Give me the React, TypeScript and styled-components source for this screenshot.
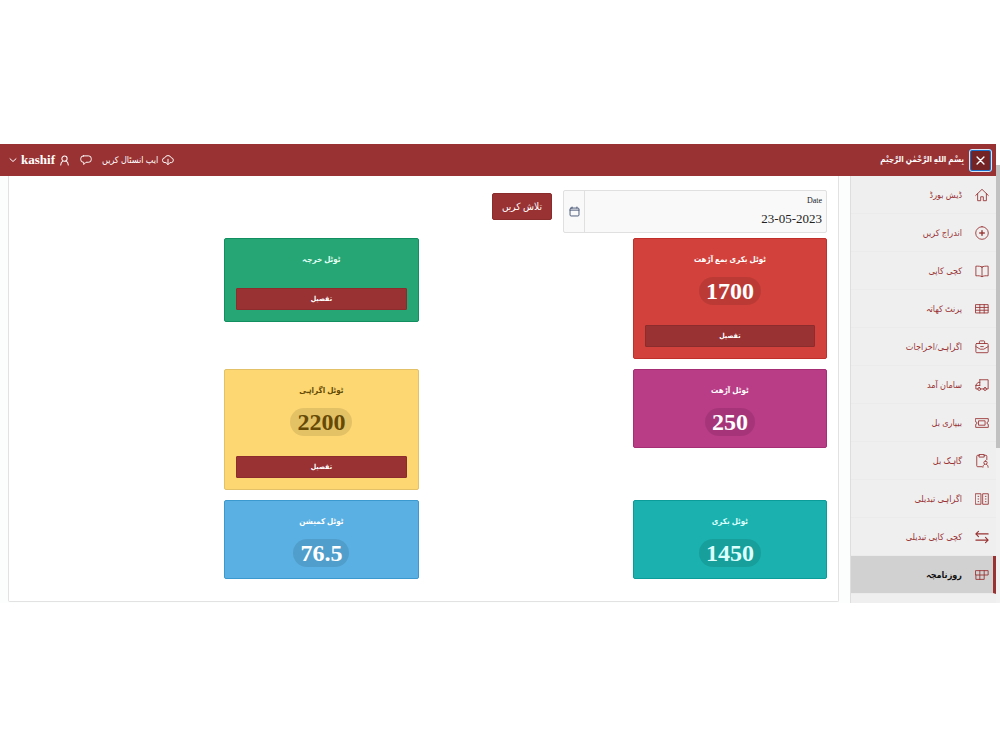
import React from "react";
import styled, { createGlobalStyle } from "styled-components";

const brand = "#993233";

const GlobalStyle = createGlobalStyle`
  *, *::before, *::after { box-sizing: border-box; }
  body {
    margin: 0;
    background: #fff;
    font-family: "Liberation Serif", "DejaVu Sans Condensed", "DejaVu Sans", serif;
  }
  button, input { font-family: inherit; margin: 0; }
`;

const Page = styled.div`
  direction: rtl;
  display: flex;
  margin-top: 144px;
`;

const ScrollRail = styled.div`
  flex: none;
  width: 4px;
  padding-top: 21px;
  background: linear-gradient(#fff 21px, #f1f1f1 21px);
`;

const ScrollThumb = styled.div`
  height: 283px;
  background: #c1c1c1;
`;

const Shell = styled.div`
  flex: 1;
  min-width: 0;
`;

const TopBar = styled.header`
  display: flex;
  align-items: center;
  height: 32px;
  padding: 0 4px 0 9px;
  background: ${brand};
  color: #fff;
`;

const CloseButton = styled.button`
  display: grid;
  place-items: center;
  width: 23px;
  height: 23px;
  padding: 0;
  border: 2px solid #1b6fc9;
  border-radius: 3px;
  outline: 1px solid #d9e6f5;
  outline-offset: -1px;
  background: #752425;
  color: #fff;
`;

const Brand = styled.strong`
  flex: 1;
  margin-right: 5px;
  font-size: 8px;
  line-height: 20px;
`;

const TopActions = styled.div`
  display: flex;
  align-items: center;
  gap: 10px;
`;

const TopButton = styled.button`
  display: flex;
  align-items: center;
  gap: 4px;
  padding: 0;
  border: 0;
  background: none;
  color: inherit;
  font-size: 9px;
  line-height: 20px;
`;

const UserName = styled.span`
  font-size: 13px;
  font-weight: 700;
`;

const Body = styled.div`
  display: flex;
  background: #fcfdfd;
`;

const Sidebar = styled.nav`
  flex: none;
  width: 146px;
  padding-bottom: 9px;
  border-left: 1px solid #dedede;
  background: #efefef;
`;

const NavLink = styled.a<{ $active?: boolean }>`
  display: flex;
  align-items: center;
  gap: 13px;
  height: 38px;
  padding-right: ${(p) => (p.$active ? 4 : 7)}px;
  border-right: ${(p) => (p.$active ? `3px solid ${brand}` : "0")};
  border-bottom: 1px solid #ebebeb;
  background: ${(p) => (p.$active ? "#d1d1d1" : "transparent")};
  color: ${(p) => (p.$active ? "#111" : brand)};
  font-size: 9px;
  font-weight: ${(p) => (p.$active ? 700 : 400)};
  text-decoration: none;

  svg { color: ${brand}; }
`;

const Main = styled.main`
  flex: 1;
  min-width: 0;
  padding: 0 11px 1px 8px;
`;

const Panel = styled.section`
  height: 100%;
  padding: 14px 11px 20px;
  border: 1px solid #e2e2e2;
  border-top: 0;
  border-radius: 0 0 2px 2px;
  background: #fff;
`;

const Filters = styled.form`
  display: flex;
  align-items: flex-start;
  gap: 11px;
  margin-bottom: 5px;
`;

const DateField = styled.div`
  display: flex;
  width: 264px;
  height: 43px;
  border: 1px solid #e0e0e0;
  border-radius: 2px;
  background: #f9f9f9;
`;

const DateText = styled.div`
  display: flex;
  flex: 1;
  min-width: 0;
  flex-direction: column;
  padding: 5px 4px;
`;

const DateLabel = styled.label`
  color: #222;
  font-size: 8px;
  line-height: 10px;
`;

const DateInput = styled.input`
  width: 100%;
  height: 18px;
  margin-top: 4px;
  padding: 0;
  border: 0;
  background: none;
  color: #222;
  font-size: 13px;
  text-align: right;
`;

const CalendarButton = styled.button`
  display: grid;
  place-items: center;
  width: 21px;
  padding: 0;
  border: 0;
  border-right: 1px solid #e0e0e0;
  background: none;
  color: #4a5a78;
`;

const SearchButton = styled.button`
  width: 60px;
  height: 27px;
  margin-top: 3px;
  padding: 0;
  border: 1px solid #8a2b2c;
  border-radius: 2px;
  background: ${brand};
  color: #fff;
  font-size: 10px;
`;

const Cards = styled.div`
  display: grid;
  grid-template-columns: repeat(4, 1fr);
  gap: 10px;
  align-items: start;
`;

const Card = styled.article<{ $bg: string; $edge: string; $ink: string; $column: number }>`
  grid-column: ${(p) => p.$column};
  display: flex;
  flex-direction: column;
  align-items: center;
  padding: 11px;
  border: 1px solid ${(p) => p.$edge};
  border-radius: 2px;
  background: ${(p) => p.$bg};
  color: ${(p) => p.$ink};
`;

const CardTitle = styled.h2`
  margin: 0;
  font-size: 8px;
  line-height: 20px;
`;

const Amount = styled.span`
  margin-top: 7px;
  padding: 0 7px;
  border-radius: 14px;
  background: rgba(0, 0, 0, 0.1);
  font-size: 24px;
  font-weight: 700;
  line-height: 28px;
`;

const DetailButton = styled.button`
  width: 100%;
  height: 22px;
  margin-top: 18px;
  padding: 0;
  border: 1px solid #8d2c2d;
  border-radius: 1px;
  background: ${brand};
  color: #fff;
  font-size: 7px;
  font-weight: 700;

  ${Amount} + & { margin-top: 20px; }
`;

type IconProps = { d: string; size?: number; weight?: number };

const Icon = ({ d, size = 14, weight = 1 }: IconProps) => (
  <svg width={size} height={size} viewBox="0 0 16 16" fill="none" stroke="currentColor"
    strokeWidth={weight} strokeLinecap="round" strokeLinejoin="round" aria-hidden="true">
    <path d={d} />
  </svg>
);

const icons = {
  close: "M3 3l10 10M13 3L3 13",
  cloud: "M5 11.5H4a3.200 3.200 0 0 1-.3-6.400A4.600 4.600 0 0 1 12.300 5a3.300 3.300 0 0 1 .2 6.500H11M8 7v7M5.8 12L8 14.2 10.2 12",
  chat: "M4.500 2.500h7a3.500 3.500 0 0 1 3.500 3.500v1.500a3.500 3.500 0 0 1-3.500 3.500H8L5 14v-3h-.5A3.500 3.500 0 0 1 1 7.500V6a3.500 3.500 0 0 1 3.500-3.500z",
  user: "M8 1.500a3.800 3.800 0 1 1 0 7.600 3.800 3.800 0 0 1 0-7.600zM2.500 14.500c0-3 1.500-5 3.500-6M13.500 14.500c0-3-1.500-5-3.500-6",
  chevron: "M2 5.500l6 5.500 6-5.500",
  calendar: "M3 3h10a1.500 1.500 0 0 1 1.500 1.500V13a1.500 1.500 0 0 1-1.500 1.500H3A1.500 1.500 0 0 1 1.500 13V4.500A1.500 1.500 0 0 1 3 3zM1.500 6h13M4.500 1.500V3M11.500 1.500V3",
};

const navItems = [
  { label: "ڈیش بورڈ", d: "M.8 8.500L8 1.500l7.200 7M3 6.500v8h3.500V10h3v4.500H13v-8" },
  { label: "اندراج کریں", d: "M8 .8a7.200 7.200 0 1 1 0 14.400A7.200 7.200 0 0 1 8 .8zM8 5v6M5 8h6M8 5.600v4.800M5.600 8h4.800" },
  { label: "کچی کاپی", d: "M8 3.500C6.500 2.500 4 2.300 1 2.500v11c3-.2 5.500 0 7 1 1.500-1 4-1.200 7-1v-11c-3-.2-5.500 0-7 1zM8 3.500v11" },
  { label: "پرنٹ کھاتہ", d: "M1 3h14v9.500H1zM1 6.200h14M1 9.400h14M5.500 3v9.500M10.500 3v9.500" },
  { label: "اگراہی/اخراجات", d: "M2 4h12a1 1 0 0 1 1 1v8.500a1 1 0 0 1-1 1H2a1 1 0 0 1-1-1V5a1 1 0 0 1 1-1zM5 4V2a1 1 0 0 1 1-1h4a1 1 0 0 1 1 1v2M1 7.500l5 3h4l5-3M6.500 7.500h3" },
  { label: "سامان آمد", d: "M5.500 2H15v10.500h-2M10 12.500H6.500M5.500 5h-2L1 8v4.500h2M5.500 2v6.500M1 8.500h4.500M4.800 11a1.600 1.600 0 1 1 0 3.200 1.600 1.600 0 0 1 0-3.200zM11.500 11a1.600 1.600 0 1 1 0 3.200 1.600 1.600 0 0 1 0-3.200z" },
  { label: "بیپاری بل", d: "M.8 3h14.400v3.500a1.500 1.500 0 0 0 0 3V13H.8V9.500a1.500 1.500 0 0 0 0-3zM4.500 5.500h7v5h-7z" },
  { label: "گاہک بل", d: "M8 14.500H3a1 1 0 0 1-1-1V2.500a1 1 0 0 1 1-1h2M10.500 1.500h2a1 1 0 0 1 1 1v4M5 .6h5.500v2.900H5zM12 8a1.900 1.900 0 1 1 0 3.800A1.900 1.900 0 0 1 12 8zM9 15.200c0-2 1-3 2-3.500M15 15.200c0-2-1-3-2-3.500" },
  { label: "اگراہی تبدیلی", d: "M.8 2h6v12h-6zM9.200 2h6v12h-6zM3.500 5h.8M3.500 8h.8M3.500 11h.8M11.800 5h.8M11.800 8h.8M11.800 11h.8" },
  { label: "کچی کاپی تبدیلی", d: "M15 4.500H1M4 1.500l-3 3 3 3M1 11.500h14M12 8.500l3 3-3 3", weight: 1.3 },
  { label: "روزنامچہ", d: "M1 3h14v5H1zM1 8v5h9.500V3M5.500 3v10", active: true },
];

const cards = [
  { title: "ٹوٹل بکری بمع آڑھت", amount: "1700", detail: true, bg: "#d2413b", edge: "#c02f2a", ink: "#fff", column: 1 },
  { title: "ٹوٹل خرچہ", detail: true, bg: "#26a575", edge: "#118f60", ink: "#e2fff4", column: 3 },
  { title: "ٹوٹل آڑھت", amount: "250", bg: "#b83c86", edge: "#a52e75", ink: "#fff", column: 1 },
  { title: "ٹوٹل اگراہی", amount: "2200", detail: true, bg: "#fdd771", edge: "#e2c168", ink: "#654a06", column: 3 },
  { title: "ٹوٹل بکری", amount: "1450", bg: "#1ab1ae", edge: "#0b9c99", ink: "#dcfffd", column: 1 },
  { title: "ٹوٹل کمیشن", amount: "76.5", bg: "#5ab0e2", edge: "#3c99cf", ink: "#fff", column: 3 },
];

export default function App() {
  return (
    <>
      <GlobalStyle />
      <Page lang="ur">
        <ScrollRail><ScrollThumb /></ScrollRail>
        <Shell>
          <TopBar>
            <CloseButton type="button" aria-label="Close menu"><Icon d={icons.close} size={11} weight={2} /></CloseButton>
            <Brand lang="ar">بِسْمِ اللهِ الرَّحْمٰنِ الرَّحِيْمِ</Brand>
            <TopActions>
              <TopButton type="button"><Icon d={icons.cloud} size={12} weight={1.3} />ایپ انسٹال کریں</TopButton>
              <TopButton type="button" aria-label="Messages"><Icon d={icons.chat} size={12} weight={1.3} /></TopButton>
              <TopButton type="button">
                <Icon d={icons.user} size={11} weight={1.5} />
                <UserName>kashif</UserName>
                <Icon d={icons.chevron} size={8} weight={2} />
              </TopButton>
            </TopActions>
          </TopBar>
          <Body>
            <Sidebar>
              {navItems.map((n) => (
                <NavLink key={n.label} href="#" $active={n.active} aria-current={n.active ? "page" : undefined}>
                  <Icon d={n.d} weight={n.weight} />
                  {n.label}
                </NavLink>
              ))}
            </Sidebar>
            <Main>
              <Panel>
                <Filters onSubmit={(e) => e.preventDefault()}>
                  <DateField>
                    <DateText>
                      <DateLabel htmlFor="date">Date</DateLabel>
                      <DateInput id="date" dir="ltr" defaultValue="23-05-2023" />
                    </DateText>
                    <CalendarButton type="button" aria-label="Open calendar"><Icon d={icons.calendar} size={11} weight={1.4} /></CalendarButton>
                  </DateField>
                  <SearchButton type="submit">تلاش کریں</SearchButton>
                </Filters>
                <Cards>
                  {cards.map((c) => (
                    <Card key={c.title} $bg={c.bg} $edge={c.edge} $ink={c.ink} $column={c.column}>
                      <CardTitle>{c.title}</CardTitle>
                      {c.amount && <Amount>{c.amount}</Amount>}
                      {c.detail && <DetailButton type="button">تفصیل</DetailButton>}
                    </Card>
                  ))}
                </Cards>
              </Panel>
            </Main>
          </Body>
        </Shell>
      </Page>
    </>
  );
}
